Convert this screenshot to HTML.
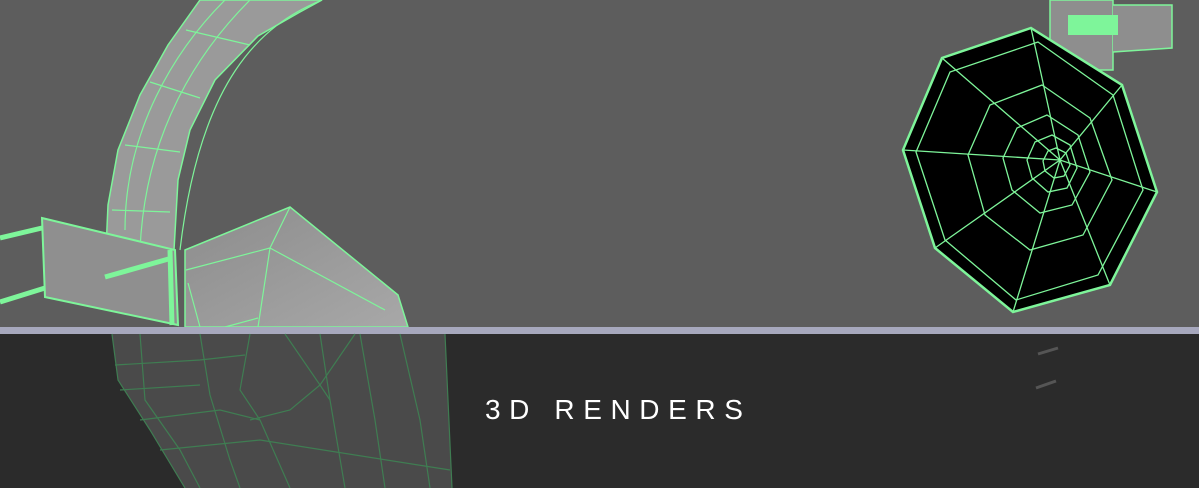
<!DOCTYPE html>
<html><head><style>
html,body{margin:0;padding:0;}
body{width:1199px;height:488px;overflow:hidden;background:#5d5d5d;position:relative;font-family:"Liberation Sans",sans-serif;}
svg{position:absolute;left:0;top:0;}
.t{position:absolute;left:485px;top:394px;color:#fff;font-size:28px;letter-spacing:8.6px;font-weight:normal;white-space:nowrap;}
</style></head><body>
<svg width="1199" height="488" viewBox="0 0 1199 488">
<defs>
<linearGradient id="g1" x1="0" y1="0" x2="1" y2="1"><stop offset="0" stop-color="#8c8c8c"/><stop offset="1" stop-color="#a8a8a8"/></linearGradient>
</defs>
<rect width="1199" height="488" fill="#5d5d5d"/>
<!-- headband -->
<path d="M200,0 L322,0 L300,12 L258,36 L215,80 L190,130 L178,180 L174,250 L106,250 L108,205 L118,150 L140,95 L168,45 Z" fill="#9a9a9a" stroke="#7ef59a" stroke-width="1.5"/>
<path d="M322,0 C260,25 200,80 180,250" fill="none" stroke="#7ef59a" stroke-width="1.2"/>
<path d="M250,0 C200,50 145,130 140,250 M225,0 C175,50 125,130 125,230" fill="none" stroke="#7ef59a" stroke-width="1.2"/>
<path d="M186,30 L250,45 M150,82 L200,98 M125,145 L180,152 M112,210 L170,212" stroke="#7ef59a" stroke-width="1.2" fill="none"/>
<!-- bracket -->
<polygon points="42,218 175,250 178,325 45,297" fill="#8f8f8f" stroke="#7ef59a" stroke-width="2"/>
<path d="M0,238 L42,228 M0,302 L45,288 M105,277 L172,258" stroke="#7ef59a" stroke-width="5"/>
<path d="M170,250 L172,325" stroke="#7ef59a" stroke-width="5"/>
<!-- earcup -->
<polygon points="185,250 290,207 398,295 408,327 185,327" fill="url(#g1)" stroke="#7ef59a" stroke-width="1.5"/>
<path d="M186,270 L270,248 L290,207 M270,248 L258,327 M270,248 L385,310 M188,283 L200,327 M258,318 L225,327" stroke="#7ef59a" stroke-width="1.2" fill="none"/>
<!-- right post -->
<rect x="1050" y="0" width="63" height="70" fill="#8e8e8e" stroke="#7ef59a" stroke-width="1.5"/>
<path d="M1113,5 L1172,5 L1172,48 L1113,52" fill="#8e8e8e" stroke="#7ef59a" stroke-width="1.5"/>
<rect x="1068" y="15" width="50" height="20" fill="#7ef59a"/>
<!-- octagon speaker -->
<polygon points="1031,28 1122,85 1157,192 1110,285 1013,312 935,248 903,150 942,58" fill="#000" stroke="#7ef59a" stroke-width="2.5"/>
<g fill="none" stroke="#7ef59a" stroke-width="1.3">
<polygon points="1038,42 1113,95 1143,190 1098,275 1016,300 945,240 916,152 950,72"/>
<polygon points="1042,85 1090,118 1112,180 1083,235 1030,250 985,215 968,155 990,105"/>
<polygon points="1047,115 1078,135 1090,172 1072,205 1040,213 1012,190 1003,158 1017,128"/>
<polygon points="1052,135 1070,145 1077,168 1067,188 1048,192 1032,178 1027,160 1035,142"/>
<polygon points="1056,148 1066,153 1070,165 1064,176 1054,178 1045,171 1043,161 1048,151"/>
<path d="M1031,28 L1060,160 L1122,85 M1157,192 L1060,160 L1110,285 M1013,312 L1060,160 L935,248 M903,150 L1060,160 L942,58"/>
</g>
<!-- bottom band -->
<rect x="0" y="327" width="1199" height="7" fill="#a7a8bd"/>
<rect x="0" y="334" width="1199" height="154" fill="#2b2b2b"/>
<path d="M112,334 L445,334 L452,488 L185,488 L150,430 L118,380 Z" fill="#4a4a4a"/>
<g fill="none" stroke="#3f7d52" stroke-width="1.2">
<path d="M112,334 L118,380 L150,430 L185,488 M445,334 L452,488"/>
<path d="M140,334 L145,400 L180,450 L200,488 M200,334 L210,395 L230,460 L240,488"/>
<path d="M250,334 L240,390 L260,420 L290,488 M320,334 L330,400 L345,488 M360,334 L375,420 L385,488 M400,334 L420,420 L430,488"/>
<path d="M285,334 L320,385 L355,334 M320,385 L290,410 L250,420 M320,385 L330,400"/>
<path d="M115,365 L200,360 L245,355 M120,390 L200,385 M140,420 L220,410 L260,420 M160,450 L260,440 L450,470"/>
</g>
<path d="M1038,354 L1058,348 M1036,388 L1056,381" stroke="#555" stroke-width="3"/>
</svg>
<div class="t">3D RENDERS</div>
</body></html>
